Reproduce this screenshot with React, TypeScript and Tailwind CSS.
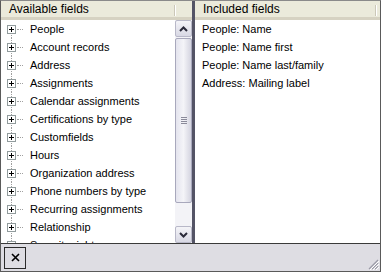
import React from 'react'

const available = [
  'People',
  'Account records',
  'Address',
  'Assignments',
  'Calendar assignments',
  'Certifications by type',
  'Customfields',
  'Hours',
  'Organization address',
  'Phone numbers by type',
  'Recurring assignments',
  'Relationship',
  'Security rights',
]

const included = [
  'People: Name',
  'People: Name first',
  'People: Name last/family',
  'Address: Mailing label',
]

function Header({ title, dividerClass }: { title: string; dividerClass: string }) {
  return (
    <div className="relative h-[19px] shrink-0 bg-[#ebeadb] border-b-[3px] border-[#d6d2c2] flex items-center pl-[8px]">
      <span className="leading-none text-[12px]">{title}</span>
      <div className={`absolute top-[4px] h-[11px] w-[2px] border-l border-[#cbc7b8] border-r border-r-white ${dividerClass}`} />
    </div>
  )
}

function PlusBox() {
  return (
    <div className="relative w-[9px] h-[9px] border border-[#919b9c] bg-white flex items-center justify-center">
      <div className="absolute w-[5px] h-px bg-black" />
      <div className="absolute h-[5px] w-px bg-black" />
    </div>
  )
}

function TreeRow({ label, first }: { label: string; first: boolean }) {
  return (
    <div className="relative h-[18px] flex items-center shrink-0">
      {!first && (
        <div className="absolute left-[10px] top-0 h-[5px] border-l border-dotted border-[#a0a0a0]" />
      )}
      <div className="absolute left-[10px] top-[13px] h-[5px] border-l border-dotted border-[#a0a0a0]" />
      <div className="ml-[6px]">
        <PlusBox />
      </div>
      <div className="w-[6px] border-t border-dotted border-[#a0a0a0] ml-px" />
      <span className="ml-[7px] whitespace-nowrap">{label}</span>
    </div>
  )
}

function ScrollButton({ up }: { up: boolean }) {
  return (
    <div className="h-[17px] w-[17px] shrink-0 border border-[#b8b8c8] rounded-[2px] bg-gradient-to-b from-[#f4f4f8] to-[#d8d8e4] flex items-center justify-center">
      <svg width="9" height="6" viewBox="0 0 9 6">
        {up ? (
          <path d="M1 5 L4.5 1.5 L8 5" stroke="#2a2a3a" strokeWidth="2" fill="none" />
        ) : (
          <path d="M1 1 L4.5 4.5 L8 1" stroke="#2a2a3a" strokeWidth="2" fill="none" />
        )}
      </svg>
    </div>
  )
}

function Scrollbar() {
  return (
    <div className="w-[17px] shrink-0 flex flex-col bg-[#f3f3f7]">
      <ScrollButton up />
      <div className="mt-px h-[165px] w-[17px] border border-[#a8a8bc] rounded-[2px] bg-gradient-to-r from-[#e4e4ee] via-[#f4f4f8] to-[#d4d4e0] flex flex-col items-center justify-center gap-px">
        <div className="w-[6px] h-px bg-[#8a8a9a]" />
        <div className="w-[6px] h-px bg-[#8a8a9a]" />
        <div className="w-[6px] h-px bg-[#8a8a9a]" />
        <div className="w-[6px] h-px bg-[#8a8a9a]" />
      </div>
      <div className="flex-1" />
      <ScrollButton up={false} />
    </div>
  )
}

export default function App() {
  return (
    <div
      className="w-[381px] h-[272px] border border-[#5a5a5a] border-t-[#8a8a8a] bg-white text-black text-[11px] flex flex-col overflow-hidden"
      style={{ fontFamily: '"Liberation Sans", Arial, sans-serif' }}
    >
      <div className="flex h-[242px] shrink-0">
        <div className="w-[191px] flex flex-col">
          <Header title="Available fields" dividerClass="right-[16px]" />
          <div className="flex flex-1 min-h-0">
            <div className="flex-1 flex flex-col overflow-hidden">
              {available.map((a, i) => (
                <TreeRow key={a} label={a} first={i === 0} />
              ))}
            </div>
            <Scrollbar />
          </div>
        </div>
        <div className="w-[3px] bg-[#545466] shrink-0" />
        <div className="flex-1 flex flex-col">
          <Header title="Included fields" dividerClass="right-[3px]" />
          <div className="flex flex-col pl-[7px]">
            {included.map((f) => (
              <div key={f} className="h-[18px] flex items-center whitespace-nowrap">
                {f}
              </div>
            ))}
          </div>
        </div>
      </div>
      <div className="flex-1 border-t border-[#3a3a3a] bg-[#dedde3] relative flex items-center pl-[3px]">
        <div className="w-[22px] h-[22px] border border-[#2a2a2a] flex items-center justify-center">
          <svg width="9" height="9" viewBox="0 0 9 9">
            <path d="M1 1 L8 8 M8 1 L1 8" stroke="#000" strokeWidth="1.6" />
          </svg>
        </div>
        <svg className="absolute right-[1px] bottom-[1px]" width="12" height="12" viewBox="0 0 12 12">
          <path d="M11 2 L2 11 M11 5 L5 11 M11 8 L8 11" stroke="#9a9aa6" strokeWidth="1.2" />
          <path d="M12 3 L3 12 M12 6 L6 12 M12 9 L9 12" stroke="#ffffff" strokeWidth="1" />
        </svg>
      </div>
    </div>
  )
}
